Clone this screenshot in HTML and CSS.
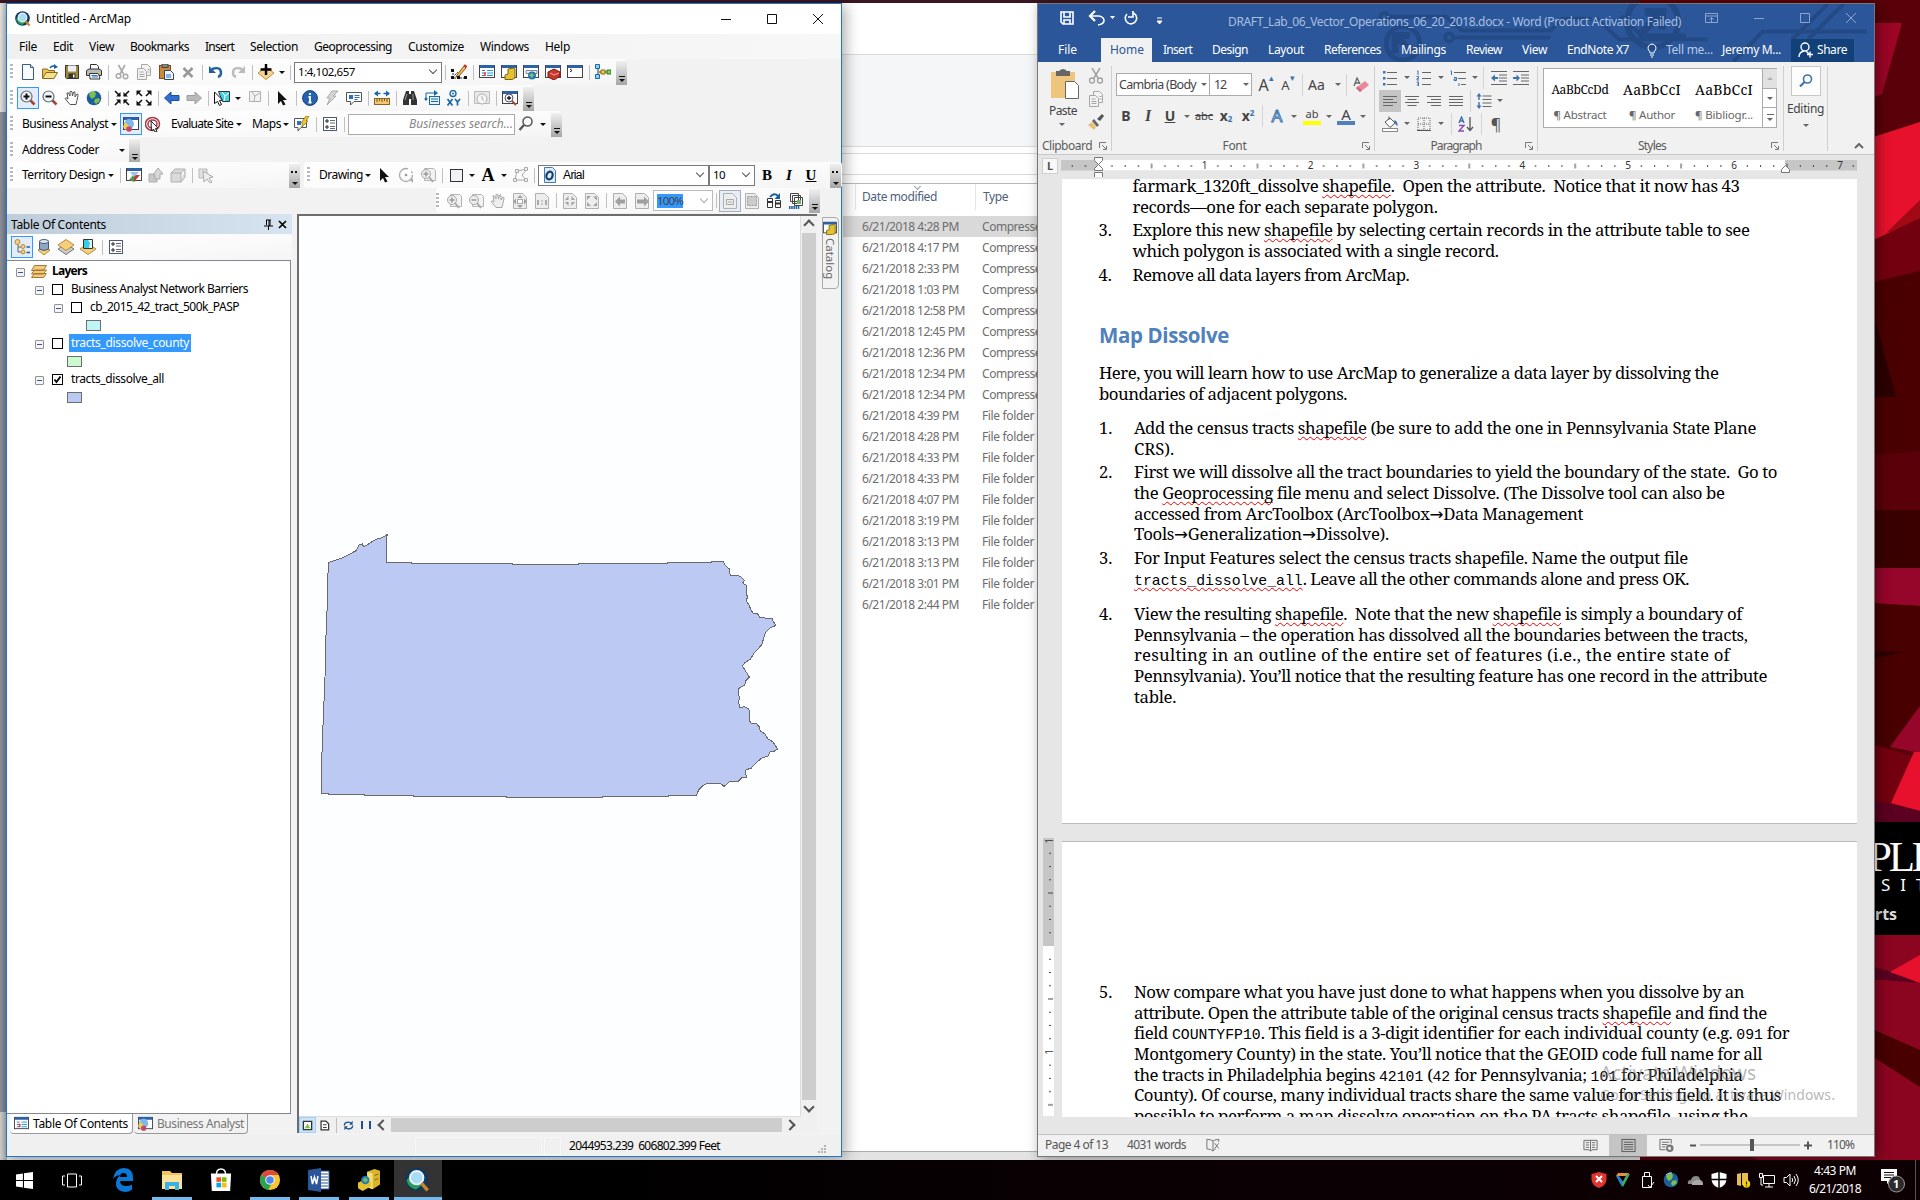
FILE: index.html
```html
<!DOCTYPE html>
<html lang="en">
<head>
<meta charset="utf-8">
<title>Untitled - ArcMap</title>
<link rel="stylesheet" href="styles.css">
</head>
<body>
<svg class="sprite">
  <symbol id="globe" viewBox="0 0 16 16"><circle cx="8" cy="8" r="7.3" fill="#1d5f9e"/><path d="M3 4l4-3 3 2-1 4-3 2-2-2zM9 9l4-1 1 3-4 3-2-2z" fill="#7cbf4a"/><path d="M3 3q3-3 6-2" stroke="#bfe0ff" fill="none"/></symbol>
  <symbol id="arcmap" viewBox="0 0 16 16"><circle cx="7.5" cy="7.5" r="7.3" fill="#12385f"/><path d="M1 8q1 5 6 6l4-3-7-6z" fill="#2a9d5b"/><circle cx="7.5" cy="6.5" r="4.3" fill="#a9dbf5" stroke="#e9f5fb" stroke-width="1.2"/><path d="M10.500 10l4 4.600" stroke="#c9862c" stroke-width="2.200"/></symbol>
  <symbol id="new" viewBox="0 0 16 16"><path d="M2.500.5h8l3 3v12h-11z" fill="#f8fbff" stroke="#3f5a80"/><path d="M10.500.5v3h3" fill="#cfe0f2" stroke="#3f5a80"/></symbol>
  <symbol id="open" viewBox="0 0 16 16"><path d="M.5 14V5h5l1 1.500h6V9" fill="#e8c35a" stroke="#8a6a1c"/><path d="M.5 14.500L4 8.500h11.500l-3.500 6z" fill="#f8df8b" stroke="#8a6a1c"/><path d="M8 4q2-3 5-1.500" stroke="#1c5fa8" stroke-width="1.500" fill="none"/><path d="M12 0l4 3-4 2z" fill="#1c5fa8"/></symbol>
  <symbol id="save" viewBox="0 0 16 16"><path d="M1.500 1.500h13v13h-12l-1-1z" fill="#a08b3a" stroke="#333"/><rect x="4" y="1.500" width="8" height="6" fill="#eef"/><rect x="4.500" y="9.500" width="7" height="5" fill="#333"/><rect x="9" y="10.500" width="1.500" height="3" fill="#fff"/></symbol>
  <symbol id="print" viewBox="0 0 16 16"><path d="M4.500 6V.5h6l2 2V6" fill="#fff" stroke="#333"/><path d="M.5 6.500L3 5h10l2.500 1.500v5H.5z" fill="#bbb" stroke="#333"/><path d="M3.500 9.500h9l1.500 5.500h-10z" fill="#fff" stroke="#333"/><path d="M5.500 11.500h6M6 13h6" stroke="#2a70c0"/><rect x="12" y="8" width="2" height="1.500" fill="#e7d43a"/></symbol>
  <symbol id="cut" viewBox="0 0 16 16"><path d="M4.500 1l5 9M11 1L6 10" stroke="#aaa" stroke-width="1.600"/><circle cx="4.500" cy="12" r="2.300" fill="none" stroke="#aaa" stroke-width="1.500"/><circle cx="11.500" cy="12.500" r="2.300" fill="none" stroke="#aaa" stroke-width="1.500"/></symbol>
  <symbol id="copy" viewBox="0 0 16 16"><path d="M5.500.5h6l3 3v8h-9z" fill="#f2f2f2" stroke="#a8a8a8"/><path d="M1.500 4.500h6l3 3v8h-9z" fill="#f2f2f2" stroke="#a8a8a8"/><path d="M3.500 8h4M3.500 10.500h5M3.500 12.500h5M11.500 5.500h2M11.500 8h2" stroke="#a8a8a8"/></symbol>
  <symbol id="paste" viewBox="0 0 16 16"><rect x="1.500" y="1.500" width="11" height="13" fill="#c98b3b" stroke="#7a4e17"/><rect x="4" y="0" width="6" height="3.500" fill="#888" stroke="#444"/><path d="M6.500 6.500h6l3 3v6h-9z" fill="#eef5ff" stroke="#345"/><path d="M8 11h5M8 13h5" stroke="#2a70c0"/></symbol>
  <symbol id="del" viewBox="0 0 16 16"><path d="M3.500 4l9 9M12.500 4l-9 9" stroke="#999" stroke-width="2.600"/></symbol>
  <symbol id="undo" viewBox="0 0 16 16"><path d="M4 5q9-3 9 4q0 3-3 4" stroke="#1f5f9f" stroke-width="2.400" fill="none"/><path d="M1 2v7h7z" fill="#1f5f9f"/></symbol>
  <symbol id="redo" viewBox="0 0 16 16"><path d="M12 5q-9-3-9 4q0 3 3 4" stroke="#bbb" stroke-width="2.400" fill="none"/><path d="M15 2v7H8z" fill="#bbb"/></symbol>
  <symbol id="add" viewBox="0 0 16 16"><path d="M8 3l8 6-8 6.500L0 9z" fill="#f6d28c" stroke="#c09040"/><path d="M8 0v11M2.500 5.500h11" stroke="#000" stroke-width="2.400"/></symbol>
  <symbol id="edit" viewBox="0 0 16 16"><path d="M2 6v8h12M2 13l5-5" stroke="#222" fill="none" stroke-dasharray="2 1"/><path d="M6 11l7-9 2 2-7 8-3 1z" fill="#f0b95b" stroke="#8a5a1c"/><path d="M13 1l3 2" stroke="#c33" stroke-width="2"/><path d="M0 5h3v3H0zM0 12h3v3H0zM6 12h3v3H6zM13 12h3v3h-3z" fill="#111"/></symbol>
  <symbol id="win" viewBox="0 0 16 16"><rect x=".5" y="1.500" width="15" height="12" fill="#fff" stroke="#444"/><rect x="1" y="1" width="14" height="3" fill="#2d62a8"/></symbol>
  <symbol id="wtoc" viewBox="0 0 16 16"><use href="#win"/><path d="M3 6.500h3M3 9h3M3 11.500h3" stroke="#3a6fc0"/><path d="M8 6.500h6M8 9h6M8 11.500h6" stroke="#1c9ae0"/><path d="M5 9h2M5 11h2" stroke="#e33" stroke-width="1.500"/></symbol>
  <symbol id="wcat" viewBox="0 0 16 16"><use href="#win"/><path d="M7 5l5-1 2 1v9l-3 1.500H4V11l3-1z" fill="#e3c22e" stroke="#7b6510"/></symbol>
  <symbol id="wsrch" viewBox="0 0 16 16"><use href="#win"/><path d="M3 6.500h11v3H3z" fill="#e8eef5" stroke="#889"/><circle cx="9" cy="11.500" r="4" fill="#2577bd"/><path d="M6 11l3-2 2 2-2 3z" fill="#81c25a"/></symbol>
  <symbol id="wbox" viewBox="0 0 16 16"><use href="#win"/><path d="M3 8l6-3 6 3v4l-6 4-6-3z" fill="#c8372b" stroke="#7d1611"/><path d="M5 9l4 2 5-2" stroke="#f3a79f" fill="none"/></symbol>
  <symbol id="wpy" viewBox="0 0 16 16"><use href="#win"/><path d="M3 5l2 1.500L3 8" stroke="#111" fill="none"/></symbol>
  <symbol id="model" viewBox="0 0 16 16"><path d="M3 5v6M4 8h10" stroke="#333"/><path d="M.5.500h4v4h-4zM.5 10.500h4v4h-4z" fill="#8ed0f7" stroke="#1966a8"/><path d="M6 6h4v4H6z" fill="#f3cf45" stroke="#87670d"/><path d="M12 6h4v4h-4z" fill="#7fcf63" stroke="#2c7a1d"/></symbol>
  <symbol id="zin" viewBox="0 0 16 16"><path d="M9.500 9.500l5 5" stroke="#a0493a" stroke-width="2.600"/><circle cx="6.500" cy="6.500" r="5.500" fill="#eef4fa" stroke="#6c6c6c" stroke-width="1.200"/><path d="M3.500 6.500h6M6.500 3.500v6" stroke="#111" stroke-width="2"/></symbol>
  <symbol id="zout" viewBox="0 0 16 16"><path d="M9.500 9.500l5 5" stroke="#a0493a" stroke-width="2.600"/><circle cx="6.500" cy="6.500" r="5.500" fill="#eef4fa" stroke="#6c6c6c" stroke-width="1.200"/><path d="M3.500 6.500h6" stroke="#111" stroke-width="2"/></symbol>
  <symbol id="hand" viewBox="0 0 16 16"><path d="M6 14.500L1 8.500q1-1.500 3 .5L3 3q1.500-1 2 1l1 2V1.500q1.500-1 2 .5l.5 4 1-4q1.500-1 1.500 1v4l2-3q1.500 0 1 1.500-1 5-2 9z" fill="#fff" stroke="#555"/></symbol>
  <symbol id="fin" viewBox="0 0 16 16"><path d="M1 1l5 5M15 1l-5 5M1 15l5-5M15 15l-5-5" stroke="#111" stroke-width="1.600"/><path d="M6.500 2v4.500H2zM9.500 2v4.500H14zM6.500 14V9.500H2zM9.500 14V9.500H14z" fill="#111"/></symbol>
  <symbol id="fout" viewBox="0 0 16 16"><path d="M2 2l4 4M14 2l-4 4M2 14l4-4M14 14l-4-4" stroke="#111" stroke-width="1.600"/><path d="M.5.500h5l-5 5zM15.500.500h-5l5 5zM.5 15.500h5l-5-5zM15.500 15.500h-5l5-5z" fill="#111"/></symbol>
  <symbol id="back" viewBox="0 0 16 16"><path d="M.5 8L7 2v3.500h8v5H7V14z" fill="#2f6fd0" stroke="#1d4e9c"/></symbol>
  <symbol id="fwd" viewBox="0 0 16 16"><path d="M15.500 8L9 2v3.500H1v5h8V14z" fill="#b9b9b9" stroke="#a0a0a0"/></symbol>
  <symbol id="sel" viewBox="0 0 16 16"><path d="M4.500 1.500h11v10h-7z" fill="#3fd0ea" stroke="#333"/><path d="M8 2l3 4 4-3M11 6l-1 5" stroke="#fff" fill="none"/><path d="M.5 2l8 8-3 .5 2 4-2 1-2-4-3 2z" fill="#fff" stroke="#111"/></symbol>
  <symbol id="clr" viewBox="0 0 16 16"><path d="M3.500 1.500h11v10h-11z" fill="#f3f3f3" stroke="#b0b0b0"/><path d="M6 2l3 4 5-3M9 6l-1 5" stroke="#b0b0b0" fill="none"/></symbol>
  <symbol id="ptr" viewBox="0 0 16 16"><path d="M4 1l9 9H9l2.500 4.500-2.500 1L7 11l-3 3z" fill="#111"/></symbol>
  <symbol id="info" viewBox="0 0 16 16"><circle cx="8" cy="8" r="7.400" fill="#2462ae" stroke="#143e78"/><path d="M8 3v2M6.500 7H8v5.500M6.500 12.500h3" stroke="#fff" stroke-width="1.800" fill="none"/></symbol>
  <symbol id="bolt" viewBox="0 0 16 16"><path d="M8 1h6L9 6h3L3 15l3-7H3z" fill="#d5d5d5" stroke="#aaa"/></symbol>
  <symbol id="html" viewBox="0 0 16 16"><path d="M.5 2.500h15v9H8L4.500 15v-3.500h-4z" fill="#fff" stroke="#555"/><rect x="3" y="5" width="4" height="4" fill="#2a6fc0"/><path d="M8.500 5.500h5M8.500 7.500h5M8.500 9.500h3" stroke="#2a6fc0"/></symbol>
  <symbol id="meas" viewBox="0 0 16 16"><path d="M1 3.500h14" stroke="#1966b0" stroke-width="1.500" stroke-dasharray="5.500 3"/><path d="M0 3.500L4 .5v6zM16 3.500L12 .5v6z" fill="#1966b0"/><rect x=".5" y="8.500" width="15" height="6" fill="#f0c877" stroke="#8c6420"/><path d="M3 9v3M5.500 9v2M8 9v3M10.500 9v2M13 9v3" stroke="#7c5614"/></symbol>
  <symbol id="bino" viewBox="0 0 16 16"><path d="M4 1h3v3h2V1h3l3 9v5H9V9H7v6H1v-5z" fill="#333"/><path d="M3 10l2-6M11 10V4" stroke="#999"/></symbol>
  <symbol id="route" viewBox="0 0 16 16"><path d="M2 8V3h9" stroke="#1966a8" fill="none"/><path d="M10 0l4 3-4 3z" fill="#1966a8"/><rect x="5.500" y="6.500" width="10" height="8" fill="#e7f2fb" stroke="#1966a8"/><path d="M7 9h7M7 11.500h7" stroke="#1966a8"/><circle cx="2" cy="9" r="1.500" fill="#1966a8"/></symbol>
  <symbol id="xy" viewBox="0 0 16 16"><circle cx="7" cy="3.500" r="3" fill="none" stroke="#1966a8" stroke-width="1.400"/><circle cx="7" cy="3.500" r="1" fill="#1966a8"/><path d="M1.500 9l5 6.500M6.500 9l-5 6.500M9 9l2.500 3L14 9M11.500 12v3.500" stroke="#1966a8" stroke-width="1.700" fill="none"/></symbol>
  <symbol id="time" viewBox="0 0 16 16"><path d="M.5 1.500h15v12H.5z" fill="#e8e8e8" stroke="#bbb"/><circle cx="8" cy="9" r="5" fill="#f6f6f6" stroke="#b0b0b0"/><path d="M8 6v3l2 1.500" stroke="#b0b0b0" fill="none"/></symbol>
  <symbol id="wview" viewBox="0 0 16 16"><use href="#win"/><circle cx="7" cy="8" r="4" fill="#eef4fa" stroke="#555"/><path d="M5 8h4M7 6v4" stroke="#111" stroke-width="1.300"/><path d="M10 11l4 4" stroke="#a0493a" stroke-width="2"/></symbol>
  <symbol id="ba" viewBox="0 0 16 16"><use href="#win"/><circle cx="6" cy="8" r="5" fill="#7fb9ea"/><path d="M2 6l5 5-4 3-3-3z" fill="#f2cf58"/><circle cx="6" cy="13" r="2.800" fill="#c4476e"/></symbol>
  <symbol id="target" viewBox="0 0 16 16"><ellipse cx="7.500" cy="8" rx="7" ry="6.500" fill="none" stroke="#a83a45" stroke-width="1.500"/><ellipse cx="7.500" cy="8" rx="4.500" ry="4" fill="none" stroke="#a83a45" stroke-width="1.500"/><path d="M6 5l7 7-2.500.5 1.500 3-2 .5-1.500-3-2 2z" fill="#fff" stroke="#222"/></symbol>
  <symbol id="note" viewBox="0 0 16 16"><path d="M.5 2.500h12v9H7L4 15v-3.500H.500z" fill="#fff" stroke="#555"/><rect x="3" y="5" width="4" height="4" fill="#2a6fc0"/><path d="M12 0h3l-3 5h2l-7 7 2-5H7z" fill="#ecc92d" stroke="#8a6d10" stroke-width=".7"/></symbol>
  <symbol id="list" viewBox="0 0 16 16"><rect x="1.500" y="1.500" width="13" height="13" fill="#fff" stroke="#4a5a72"/><path d="M8 4.500h5M8 7h5M8 10.500h5M8 12.500h5" stroke="#667"/><path d="M4 4h2v2H4zM4 10h2v2H4z" fill="none" stroke="#222"/></symbol>
  <symbol id="mag" viewBox="0 0 16 16"><circle cx="9.500" cy="5.500" r="4.500" fill="none" stroke="#555" stroke-width="1.500"/><path d="M6 9l-4.500 5" stroke="#555" stroke-width="2.400"/></symbol>
  <symbol id="terr" viewBox="0 0 16 16"><use href="#win"/><path d="M3 13l5-6v8z" fill="#4b9b4b"/><path d="M8 15V8l6 0z" fill="#c33a3a"/><path d="M4 5h9l-5 5z" fill="#9cc4ec"/></symbol>
  <symbol id="gbox" viewBox="0 0 16 16"><path d="M1 7h8v8H1z" fill="#c8c8c8" stroke="#b0b0b0"/><path d="M5 8l5-7 5 6h-3v5H7V8z" fill="#d8d8d8" stroke="#aaa"/></symbol>
  <symbol id="gcube" viewBox="0 0 16 16"><path d="M1 6h10v9H1zM1 6l4-4h10l-4 4M15 2v8l-4 5" fill="#dadada" stroke="#b0b0b0"/></symbol>
  <symbol id="garr" viewBox="0 0 16 16"><path d="M1 2h8v9H1z" fill="#e0e0e0" stroke="#b8b8b8"/><path d="M5 4l10 6-4 1 3 4-2 1-3-4-3 3z" fill="#eee" stroke="#aaa"/></symbol>
  <symbol id="rot" viewBox="0 0 16 16"><circle cx="8" cy="8" r="6.500" fill="none" stroke="#aaa" stroke-width="1.300" stroke-dasharray="32 4 2 3"/><circle cx="8" cy="8" r="1.300" fill="#999"/><path d="M11 12h4v4z" fill="#aaa"/></symbol>
  <symbol id="gzin" viewBox="0 0 16 16"><path d="M4.500 1.500h9l2 2v10h-11z" fill="#f2f2f2" stroke="#b5b5b5"/><circle cx="6" cy="7" r="4.500" fill="#eee" stroke="#a8a8a8"/><path d="M3.500 7h5M6 4.500v5" stroke="#999" stroke-width="1.500"/><path d="M9 10l4 5" stroke="#aaa" stroke-width="2"/></symbol>
  <symbol id="gzout" viewBox="0 0 16 16"><path d="M4.500 1.500h9l2 2v10h-11z" fill="#f2f2f2" stroke="#b5b5b5"/><circle cx="6" cy="7" r="4.500" fill="#eee" stroke="#a8a8a8"/><path d="M3.500 7h5" stroke="#999" stroke-width="1.500"/><path d="M9 10l4 5" stroke="#aaa" stroke-width="2"/></symbol>
  <symbol id="ghand" viewBox="0 0 16 16"><path d="M6 14.500L1 8.500q1-1.500 3 .5L3 3q1.500-1 2 1l1 2V1.500q1.500-1 2 .5l.5 4 1-4q1.500-1 1.500 1v4l2-3q1.500 0 1 1.500-1 5-2 9z" fill="#eee" stroke="#a8a8a8"/></symbol>
  <symbol id="gpage" viewBox="0 0 16 16"><path d="M1.500.5h9l4 4v11h-13z" fill="#ededed" stroke="#b0b0b0"/></symbol>
  <symbol id="gfull" viewBox="0 0 16 16"><use href="#gpage"/><path d="M8 2l3 3H5zM8 15l3-3H5zM1 8.500l3-3v6zM15 8.500l-3-3v6z" fill="#a0a0a0"/><rect x="5.500" y="6.500" width="5" height="4" fill="#fff" stroke="#aaa"/></symbol>
  <symbol id="g11" viewBox="0 0 16 16"><use href="#gpage"/><path d="M4 7v5M12 7v5M8 7.500v1M8 10.500v1" stroke="#999" stroke-width="1.600"/></symbol>
  <symbol id="gin" viewBox="0 0 16 16"><use href="#gpage"/><path d="M6.500 3v4H3zM9.500 3v4H13zM6.500 13V9H3zM9.500 13V9H13z" fill="#a0a0a0"/></symbol>
  <symbol id="gout" viewBox="0 0 16 16"><use href="#gpage"/><path d="M3 3h4L3 7zM13 3.500H9l4 4zM3 13h4L3 9zM13 13H9l4-4z" fill="#a0a0a0"/></symbol>
  <symbol id="gback" viewBox="0 0 16 16"><use href="#gpage"/><path d="M3 8.500l5-5v3h5v4H8v3z" fill="#a0a0a0"/></symbol>
  <symbol id="gfwd" viewBox="0 0 16 16"><use href="#gpage"/><path d="M15 8.500l-5-5v3H3v4h7v3z" fill="#a0a0a0"/></symbol>
  <symbol id="gfoc" viewBox="0 0 16 16"><use href="#gpage"/><path d="M4.500 6.500h7v5h-7zM6 9h4" fill="none" stroke="#a8a8a8"/></symbol>
  <symbol id="gsel" viewBox="0 0 16 16"><use href="#gpage"/><path d="M3.500 3.500h9v9h-9z" fill="#ccc" stroke="#999" stroke-dasharray="2 1"/></symbol>
  <symbol id="swap" viewBox="0 0 16 16"><path d="M4 4q4-5 8-1" stroke="#1c5f9f" stroke-width="2" fill="none"/><path d="M14 0v6H8.500z" fill="#1c5f9f"/><path d="M1.500 5.500h5v9h-5zM9.500 7.500h5v7h-5z" fill="#fff" stroke="#333"/><path d="M2 9h4M10 10.500h4" stroke="#333" stroke-width="2"/></symbol>
  <symbol id="stack" viewBox="0 0 16 16"><path d="M2.500.5h8v8h-8zM4.500 2.500h8v8h-8zM6.500 4.500h8v8h-8z" fill="#fff" stroke="#444"/><rect x="9" y="7" width="4" height="4" fill="#6cb36c"/><path d="M1 14.500h11" stroke="#1c5f9f" stroke-width="3" stroke-dasharray="1.500 .700"/></symbol>
  <symbol id="poly" viewBox="0 0 16 16"><path d="M3 13l2-9 10-2-5 6 4 5z" fill="none" stroke="#aaa"/><path d="M1.500 11.500h3v3h-3zM3.500 2.500h3v3h-3zM12.500.500h3v3h-3zM12.500 11.500h3v3h-3z" fill="#eee" stroke="#aaa"/></symbol>
  <symbol id="otf" viewBox="0 0 16 16"><path d="M2.500.5h8l3 3v12h-11z" fill="#dcebf9" stroke="#4a78b0"/><ellipse cx="7.500" cy="8.500" rx="3" ry="4" transform="rotate(20 7.500 8.500)" fill="none" stroke="#123f6e" stroke-width="2.200"/></symbol>
  <symbol id="tree" viewBox="0 0 16 16"><path d="M4 5v8h3M4 8h3" stroke="#666" fill="none"/><circle cx="3.500" cy="3" r="2.500" fill="#f4cf7d" stroke="#b98a35"/><circle cx="9" cy="7.500" r="2" fill="#f4cf7d" stroke="#b98a35"/><circle cx="9" cy="13" r="2" fill="#f4cf7d" stroke="#b98a35"/><path d="M12.500 8H16M12.500 13.500H16" stroke="#1c5fa8" stroke-width="1.500"/></symbol>
  <symbol id="src" viewBox="0 0 16 16"><path d="M8 16l-6-5 6-3 6 3z" fill="#f4cf7d" stroke="#b98a35"/><path d="M3.500 2v8q4.500 3 9 0V2z" fill="#8fa5c2" stroke="#4a5a72"/><ellipse cx="8" cy="2.500" rx="4.500" ry="2" fill="#dfe8f2" stroke="#4a5a72"/></symbol>
  <symbol id="vis" viewBox="0 0 16 16"><path d="M0 10l8 5.500 8-5.500-8-5z" fill="#ccc" stroke="#777"/><path d="M0 6l8 5.500L16 6 8 .5z" fill="#f4cf7d" stroke="#b98a35"/></symbol>
  <symbol id="lsel" viewBox="0 0 16 16"><path d="M0 10l8 5.500 8-5.500-8-5z" fill="#f4cf7d" stroke="#b98a35"/><path d="M3.500.5h9v9h-9z" fill="#35cde8" stroke="#333"/><path d="M8 1h4v8H9l1-5z" fill="#eee"/></symbol>
  <symbol id="layers" viewBox="0 0 16 16"><path d="M.5 14.500l3-4h12l-3 4zM.5 11l3-4h12l-3 4zM.5 7.500l3-5h12l-3 5z" fill="#f0cb83" stroke="#a8782c"/></symbol>
  <symbol id="refresh" viewBox="0 0 16 16"><path d="M2 8q0-5 6-5 3 0 4 2M14 8q0 5-6 5-3 0-4-2" stroke="#1c4f8f" stroke-width="2" fill="none"/><path d="M14 1v6H9zM2 15V9h5z" fill="#1c4f8f"/></symbol>
  <symbol id="mapv" viewBox="0 0 16 16"><path d="M2 2h12v12H2z" fill="#fff" stroke="#333" stroke-width="2"/><path d="M4 12l4-7 4 7z" fill="#7cbf4a"/></symbol>
  <symbol id="layv" viewBox="0 0 16 16"><path d="M3 1.500h7l4 4v9H3z" fill="#fff" stroke="#333" stroke-width="1.800"/><path d="M6 7h5M6 11h5" stroke="#333" stroke-width="1.500"/></symbol>
  <symbol id="lines" viewBox="0 0 16 16"><path d="M1 3.500h14M1 9.500h14" stroke="#666"/><path d="M1 6.500h10M1 12.500h10" stroke="#666"/></symbol>
  <symbol id="linec" viewBox="0 0 16 16"><path d="M1 3.500h14M1 9.500h14M3.500 6.500h9M3.500 12.500h9" stroke="#666"/></symbol>
  <symbol id="liner" viewBox="0 0 16 16"><path d="M1 3.500h14M1 9.500h14M5 6.500h10M5 12.500h10" stroke="#666"/></symbol>
  <symbol id="linej" viewBox="0 0 16 16"><path d="M1 3.500h14M1 9.500h14M1 6.500h14M1 12.500h14" stroke="#666"/></symbol>
  <symbol id="bul" viewBox="0 0 16 16"><path d="M5 2.500h10M5 8.500h10M5 14.500h10" stroke="#666"/><path d="M1 1h2.500v2.500H1zM1 7h2.500v2.500H1zM1 13h2.500v2.500H1z" fill="#3b73af"/></symbol>
  <symbol id="num" viewBox="0 0 16 16"><path d="M6 2.500h9M6 8.500h9M6 14.500h9" stroke="#666"/><path d="M1 1h1v4M.5 6.500h2v2h-1.500v1.500H3M.5 12h2v4H.500M1 14h1.500" stroke="#3b73af" fill="none"/></symbol>
  <symbol id="multi" viewBox="0 0 16 16"><path d="M4 2.500h12M8 8.500h8M11 14.500h5" stroke="#666"/><path d="M.5 1h1v4M4 7.500h2.500v3H4V9h2M9 13v3" stroke="#3b73af" fill="none"/></symbol>
  <symbol id="outd" viewBox="0 0 16 16"><path d="M0 1.500h16M8 5h8M8 8h8M8 11h8M0 14.500h16" stroke="#666"/><path d="M0 8l4-3.500v2.500h3v2H4v2.500z" fill="#3b73af"/></symbol>
  <symbol id="ind" viewBox="0 0 16 16"><path d="M0 1.500h16M8 5h8M8 8h8M8 11h8M0 14.500h16" stroke="#666"/><path d="M7 8L3.500 4.500v2.500H0v2h3.500v2.500z" fill="#3b73af"/></symbol>
  <symbol id="spc" viewBox="0 0 16 16"><path d="M6.500 3h9M6.500 6.500h9M6.500 10h9M6.500 13.500h9" stroke="#666"/><path d="M3 1v14" stroke="#3b73af" stroke-width="1.400" stroke-dasharray="6 2"/><path d="M3 0L.500 3.500h5zM3 16L.500 12.500h5z" fill="#3b73af"/></symbol>
  <symbol id="bucket" viewBox="0 0 16 16"><path d="M3 6l5-4 5 5-5 4.500zM7 4V.500" fill="#fff" stroke="#555"/><path d="M12 4q4 1 3.500 6-2-1-3-4z" fill="#3b73af"/><rect x=".5" y="12.500" width="15" height="3" fill="#fff" stroke="#888"/></symbol>
  <symbol id="bord" viewBox="0 0 16 16"><path d="M2 2h12v12H2zM8 2v12M2 8h12" stroke="#666" stroke-dasharray="1 1" fill="none"/><path d="M1 14.500h14" stroke="#555"/></symbol>
  <symbol id="az" viewBox="0 0 16 16"><path d="M1 7l2.500-6L6 7M2 5h3" stroke="#3b73af" stroke-width="1.400" fill="none"/><path d="M1 9.500h5L1 15h5" stroke="#8b4bb0" stroke-width="1.400" fill="none"/><path d="M12 1v13M9 11l3 3.500 3-3.500" stroke="#555" stroke-width="1.300" fill="none"/></symbol>
  <symbol id="era" viewBox="0 0 16 16"><path d="M1 9l3-8 3 6M2 6h4" stroke="#666" stroke-width="1.300" fill="none"/><path d="M3 11l9-7 4 4-9 7z" fill="#ea8799"/><path d="M3 11l2-1.500 4 4L7 15z" fill="#d76a80"/></symbol>
  <symbol id="cut2" viewBox="0 0 16 16"><path d="M4 0l6 10M12 0L6 10" stroke="#a0a0a0" stroke-width="1.500"/><circle cx="4" cy="12.500" r="2.500" fill="none" stroke="#a0a0a0" stroke-width="1.300"/><circle cx="12" cy="12.500" r="2.500" fill="none" stroke="#a0a0a0" stroke-width="1.300"/></symbol>
  <symbol id="brush" viewBox="0 0 16 16"><path d="M9 5l5-5 2 2-4 5z" fill="#555"/><path d="M6 5l5 6-2 2-5-6z" fill="#666"/><path d="M4 8l4 5-2 3-6-5z" fill="#eabf74"/></symbol>
  <symbol id="launch" viewBox="0 0 8 8"><path d="M.5 6V.5H7M3 3l4 4M7.500 4v3.500H4" stroke="#777" fill="none"/></symbol>
  <symbol id="book" viewBox="0 0 16 16"><path d="M8 2.500H1v10h5.500L8 14l1.500-1.500H15v-10zM8 2.500V14M3 5h3.500M3 7.500h3.500M3 10h3.500M9.500 5H13M9.500 7.500H13M9.500 10H13" stroke="#666" fill="none"/></symbol>
  <symbol id="page" viewBox="0 0 16 16"><rect x="1" y="1.500" width="14" height="13" fill="none" stroke="#555"/><path d="M3 4.500h10M3 7h10M3 9.500h10M3 12h10" stroke="#555"/></symbol>
  <symbol id="web" viewBox="0 0 16 16"><path d="M13 6V1.500H1v11h6M3 4.500h8M3 7h6M3 9.500h4" stroke="#666" fill="none"/><circle cx="11.500" cy="11" r="4" fill="#777"/><path d="M9 10l3-1 1 3-2 1z" fill="#eee"/></symbol>
  <symbol id="proof" viewBox="0 0 16 16"><path d="M8 3.500Q6 1.500 1 1.500v11q5 0 7 2.500 1-2 3-2.500M8 3.500Q9 2 14.500 1.500v3M8 3.500V14M10 6l4.500 6M14.500 6L10 12" stroke="#666" fill="none"/></symbol>
</svg>

<svg class="wall" viewBox="0 0 1920 1200">
  <rect width="1920" height="1200" fill="#5a0009"/>
  <rect width="1640" height="4" fill="#3a1522"/>
  <path d="M1870 23h32l-20 71-12 5z" fill="#9c0526"/>
  <path d="M1870 138l50-16v96l-50 24z" fill="#e8112d"/><path d="M1886 233l34-33v22z" fill="#a00a14"/>
  <path d="M1870 242l50-24v53l-50 12z" fill="#73000f"/><path d="M1870 283l50-12v180l-50 4z" fill="#4a0000"/>
  <path d="M1870 300l26 97h-26z" fill="#2c0000"/><path d="M1870 510h50v58h-50z" fill="#3a0000"/>
  <path d="M1870 568h50v38l-50-3z" fill="#96052a"/><path d="M1870 603l50 3v147l-50-8z" fill="#480000"/>
  <path d="M1870 651l35 1-35 7z" fill="#2c0000"/><path d="M1870 744l50 14v52l-50-8z" fill="#73000f"/>
  <path d="M1920 706l-30 41 30 6z" fill="#96052a"/><path d="M1914 752h6v59l-29-8z" fill="#e8112d"/>
  <path d="M1870 799l50 12v11h-50z" fill="#5b0020"/><path d="M1870 935h50v265h-50z" fill="#8c0520"/>
  <path d="M1870 966l23 6 27 11-50-4z" fill="#5b0020"/><path d="M1920 955l-30 17 30 11z" fill="#e8112d"/>
  <path d="M1870 1028l50 22v37l-50-32z" fill="#480000"/><path d="M1640 1150h120l60 20h-180z" fill="#5a0009"/><path d="M1750 1156h130v10h-110z" fill="#8c0520"/>
  <rect x="1860" y="822" width="60" height="113" fill="#000"/>
  <text x="1868" y="871" class="brand" textLength="70">PLE</text>
  <text x="1881" y="891" class="brand2" textLength="64">SITY</text>
  <text x="1875" y="920" class="brand3">rts</text>
</svg>

<section class="explorer">
  <div class="ex-nav"></div>
  <div class="ex-main">
    <div class="ex-top"></div>
    <div class="ex-ribbon"></div>
    <div class="ex-addr"></div>
    <div class="ex-addr2"></div>
    <div class="ex-head"><span data-w="75">Date modified</span><i class="ex-sort"></i><div class="ex-type"><span data-w="25">Type</span></div></div>
    <div class="ex-rows">
      <div class="ex-row on"><span data-w="97">6/21/2018 4:28 PM</span><span data-w="66">Compressed</span></div>
      <div class="ex-row"><span data-w="97">6/21/2018 4:17 PM</span><span data-w="66">Compressed</span></div>
      <div class="ex-row"><span data-w="97">6/21/2018 2:33 PM</span><span data-w="66">Compressed</span></div>
      <div class="ex-row"><span data-w="97">6/21/2018 1:03 PM</span><span data-w="66">Compressed</span></div>
      <div class="ex-row"><span data-w="103">6/21/2018 12:58 PM</span><span data-w="66">Compressed</span></div>
      <div class="ex-row"><span data-w="103">6/21/2018 12:45 PM</span><span data-w="66">Compressed</span></div>
      <div class="ex-row"><span data-w="103">6/21/2018 12:36 PM</span><span data-w="66">Compressed</span></div>
      <div class="ex-row"><span data-w="103">6/21/2018 12:34 PM</span><span data-w="66">Compressed</span></div>
      <div class="ex-row"><span data-w="103">6/21/2018 12:34 PM</span><span data-w="66">Compressed</span></div>
      <div class="ex-row"><span data-w="97">6/21/2018 4:39 PM</span><span data-w="52">File folder</span></div>
      <div class="ex-row"><span data-w="97">6/21/2018 4:28 PM</span><span data-w="52">File folder</span></div>
      <div class="ex-row"><span data-w="97">6/21/2018 4:33 PM</span><span data-w="52">File folder</span></div>
      <div class="ex-row"><span data-w="97">6/21/2018 4:33 PM</span><span data-w="52">File folder</span></div>
      <div class="ex-row"><span data-w="97">6/21/2018 4:07 PM</span><span data-w="52">File folder</span></div>
      <div class="ex-row"><span data-w="97">6/21/2018 3:19 PM</span><span data-w="52">File folder</span></div>
      <div class="ex-row"><span data-w="97">6/21/2018 3:13 PM</span><span data-w="52">File folder</span></div>
      <div class="ex-row"><span data-w="97">6/21/2018 3:13 PM</span><span data-w="52">File folder</span></div>
      <div class="ex-row"><span data-w="97">6/21/2018 3:01 PM</span><span data-w="52">File folder</span></div>
      <div class="ex-row"><span data-w="97">6/21/2018 2:44 PM</span><span data-w="52">File folder</span></div>
    </div>
  </div>
</section>

<section class="arc">
  <header class="arc-title">
    <svg class="ic"><use href="#arcmap"/></svg><span data-w="95">Untitled - ArcMap</span>
    <svg class="winbtns" viewBox="0 0 104 12"><path d="M0 6.500h10M46.500 1.500h9v9h-9zM92 1l10 10M102 1L92 11" stroke="#111" fill="none"/></svg>
  </header>
  <nav class="arc-menu"><span data-w="18">File</span><span data-w="20">Edit</span><span data-w="25">View</span><span data-w="59">Bookmarks</span><span data-w="29">Insert</span><span data-w="48">Selection</span><span data-w="78">Geoprocessing</span><span data-w="56">Customize</span><span data-w="49">Windows</span><span data-w="25">Help</span></nav>

  <div class="tb"><i class="grip"></i><b class="c"><svg><use href="#new"/></svg></b><b class="c"><svg><use href="#open"/></svg></b><b class="c"><svg><use href="#save"/></svg></b><b class="c"><svg><use href="#print"/></svg></b><i class="v"></i><b class="c"><svg><use href="#cut"/></svg></b><b class="c"><svg><use href="#copy"/></svg></b><b class="c"><svg><use href="#paste"/></svg></b><b class="c"><svg><use href="#del"/></svg></b><i class="v"></i><b class="c"><svg><use href="#undo"/></svg></b><b class="c"><svg><use href="#redo"/></svg></b><i class="v"></i><b class="c"><svg><use href="#add"/></svg></b><i class="d"></i><i class="v"></i><div class="combo scale"><span data-w="57">1:4,102,657</span><i class="chev"></i></div><i class="v"></i><b class="c"><svg><use href="#edit"/></svg></b><i class="v"></i><b class="c"><svg><use href="#wtoc"/></svg></b><b class="c"><svg><use href="#wcat"/></svg></b><b class="c"><svg><use href="#wsrch"/></svg></b><b class="c"><svg><use href="#wbox"/></svg></b><b class="c"><svg><use href="#wpy"/></svg></b><i class="v"></i><b class="c"><svg><use href="#model"/></svg></b><i class="ovf"></i></div>

  <div class="tb"><i class="grip"></i><b class="c on"><svg><use href="#zin"/></svg></b><b class="c"><svg><use href="#zout"/></svg></b><b class="c"><svg><use href="#hand"/></svg></b><b class="c"><svg><use href="#globe"/></svg></b><i class="v"></i><b class="c"><svg><use href="#fin"/></svg></b><b class="c"><svg><use href="#fout"/></svg></b><i class="v"></i><b class="c"><svg><use href="#back"/></svg></b><b class="c"><svg><use href="#fwd"/></svg></b><i class="v"></i><b class="c"><svg><use href="#sel"/></svg></b><i class="d"></i><b class="c"><svg><use href="#clr"/></svg></b><i class="v"></i><b class="c"><svg><use href="#ptr"/></svg></b><i class="v"></i><b class="c"><svg><use href="#info"/></svg></b><b class="c"><svg><use href="#bolt"/></svg></b><b class="c"><svg><use href="#html"/></svg></b><i class="v"></i><b class="c"><svg><use href="#meas"/></svg></b><i class="v"></i><b class="c"><svg><use href="#bino"/></svg></b><b class="c"><svg><use href="#route"/></svg></b><b class="c"><svg><use href="#xy"/></svg></b><i class="v"></i><b class="c"><svg><use href="#time"/></svg></b><i class="v"></i><b class="c"><svg><use href="#wview"/></svg></b><i class="ovf"></i></div>

  <div class="tb"><i class="grip txt"></i><span data-w="86">Business Analyst</span><i class="d wide"></i><b class="c on"><svg><use href="#ba"/></svg></b><b class="c"><svg><use href="#target"/></svg></b><span class="gap7" data-w="62">Evaluate Site</span><i class="d wide"></i><span class="gap7" data-w="29">Maps</span><i class="d"></i><b class="c"><svg><use href="#note"/></svg></b><i class="v"></i><b class="c"><svg><use href="#list"/></svg></b><i class="v"></i><div class="combo search"><em data-w="104">Businesses search...</em></div><b class="c"><svg><use href="#mag"/></svg></b><i class="d wide"></i><i class="ovf"></i></div>

  <div class="tb"><i class="grip txt"></i><span data-w="77">Address Coder</span><i class="d far"></i><i class="ovf"></i></div>

  <div class="tbline">
    <div class="tb terr"><i class="grip txt"></i><span data-w="83">Territory Design</span><i class="d wide"></i><i class="v"></i><b class="c"><svg><use href="#terr"/></svg></b><b class="c"><svg><use href="#gbox"/></svg></b><b class="c"><svg><use href="#gcube"/></svg></b><i class="v"></i><b class="c"><svg><use href="#garr"/></svg></b><i class="ovf more"></i></div>
    <div class="tb draw"><i class="grip txt"></i><span data-w="44">Drawing</span><i class="d"></i><b class="c"><svg><use href="#ptr"/></svg></b><b class="c"><svg><use href="#rot"/></svg></b><b class="c"><svg><use href="#gzin"/></svg></b><i class="v"></i><b class="c"><i class="box"></i></b><i class="d"></i><b class="c serif">A</b><i class="d"></i><b class="c"><svg><use href="#poly"/></svg></b><i class="v"></i><div class="combo face"><svg class="ic"><use href="#otf"/></svg><span data-w="21">Arial</span><i class="chev"></i></div><div class="combo size"><span data-w="12">10</span><i class="chev"></i></div><b class="c serif s">B</b><b class="c serif s it">I</b><b class="c serif s un">U</b><i class="ovf more"></i></div>
  </div>
  <div class="tb layout"><i class="grip"></i><b class="c"><svg><use href="#gzin"/></svg></b><b class="c"><svg><use href="#gzout"/></svg></b><b class="c"><svg><use href="#ghand"/></svg></b><b class="c"><svg><use href="#gfull"/></svg></b><b class="c"><svg><use href="#g11"/></svg></b><i class="v"></i><b class="c"><svg><use href="#gin"/></svg></b><b class="c"><svg><use href="#gout"/></svg></b><i class="v"></i><b class="c"><svg><use href="#gback"/></svg></b><b class="c"><svg><use href="#gfwd"/></svg></b><div class="combo pct"><mark>100%</mark><i class="chev"></i></div><i class="v"></i><b class="c off"><svg><use href="#gfoc"/></svg></b><b class="c"><svg><use href="#gsel"/></svg></b><b class="c"><svg><use href="#swap"/></svg></b><b class="c"><svg><use href="#stack"/></svg></b><i class="ovf"></i></div>

  <div class="arc-body">
    <aside class="toc">
      <div class="toc-head"><span data-w="95">Table Of Contents</span><svg viewBox="0 0 26 12"><path d="M4 1h5M4.500 1v5M8 1v6M7 1v6M2 7h9M6.500 7v4" stroke="#000" fill="none"/><path d="M17 2l7 7M24 2l-7 7" stroke="#000" stroke-width="1.700"/></svg></div>
      <div class="tb tocbar"><b class="c on"><svg><use href="#tree"/></svg></b><b class="c"><svg><use href="#src"/></svg></b><b class="c"><svg><use href="#vis"/></svg></b><b class="c"><svg><use href="#lsel"/></svg></b><i class="v"></i><b class="c"><svg><use href="#list"/></svg></b></div>
      <div class="tree">
        <div class="tr l0"><i class="pm"></i><svg class="ic"><use href="#layers"/></svg><strong data-w="35">Layers</strong></div>
        <div class="tr l1"><i class="pm"></i><i class="cb"></i><span data-w="177">Business Analyst Network Barriers</span></div>
        <div class="tr l2"><i class="pm"></i><i class="cb"></i><span data-w="149">cb_2015_42_tract_500k_PASP</span></div>
        <div class="tr s2"><i class="sw cyan"></i></div>
        <div class="tr l1"><i class="pm"></i><i class="cb"></i><mark><span data-w="118">tracts_dissolve_county</span></mark></div>
        <div class="tr s1"><i class="sw green"></i></div>
        <div class="tr l1"><i class="pm"></i><i class="cb"><svg viewBox="0 0 9 9"><path d="M1.500 4.500l2 2.500 4-5.500" stroke="#000" stroke-width="1.900" fill="none"/></svg></i><span data-w="93">tracts_dissolve_all</span></div>
        <div class="tr s1"><i class="sw blue"></i></div>
      </div>
      <div class="tabs"><div class="tab act"><svg class="ic"><use href="#wtoc"/></svg><span data-w="95">Table Of Contents</span></div><div class="tab"><svg class="ic"><use href="#ba"/></svg><span data-w="87">Business Analyst</span></div></div>
    </aside>
    <div class="mapwrap">
      <div class="maprow">
        <div class="map"><svg viewBox="0 0 1560 900" shape-rendering="crispEdges"><path d="M86 131L104 124 124 118 140 110 152 104 168 95 173 85 178 76H184L187 75 190 82 198 80 210 72 220 66 234 59 246 56 255 51 262 46 260 54V130H333V132H597V134H628V132H638V135H834V133H1101V130H1233V127H1269L1274 136 1281 144 1288 150V160L1292 168H1310L1322 173 1328 180 1334 184 1328 192 1338 198 1340 212 1338 222 1343 234 1338 246 1346 256 1352 270 1360 285 1372 284 1380 295 1395 297 1405 300 1417 299V304L1427 317 1424 321 1408 328 1396 342 1391 357 1386 376 1374 390 1362 402 1352 420 1334 432 1327 440 1338 458 1348 474 1338 484 1334 498 1322 504 1315 510V526L1319 534 1316 548 1319 566H1324L1332 562 1344 568 1348 576V605L1355 614H1370L1378 624 1381 636 1394 644 1404 660 1418 668 1433 690 1424 696 1410 698 1404 711 1385 717 1368 732 1353 748 1338 752 1336 762 1340 774 1326 776 1316 786H1290L1280 796 1272 802 1266 796 1256 793H1222L1208 800 1196 812 1190 829H1104V832H908V835H619V832H339V829H192V826H84V824H64V766L67 668 71 572 75 474 77 375 81 278 83 180Z" fill="#bcc9f2" stroke="#6a6a6a" stroke-width="3"/></svg></div>
        <div class="vs"><i class="ar up"></i><i class="thumb"></i><i class="ar dn"></i></div>
      </div>
      <div class="hs"><i class="vw on"><svg class="ic10"><use href="#mapv"/></svg></i><i class="vw"><svg class="ic10"><use href="#layv"/></svg></i><i class="v"></i><i class="vw"><svg class="ic10"><use href="#refresh"/></svg></i><i class="vw pause"></i><i class="ar lf"></i><i class="thumb"></i><i class="ar rt"></i></div>
    </div>
    <div class="cat"><div class="cat-tab"><svg class="ic"><use href="#wcat"/></svg><span>Catalog</span></div></div>
  </div>
  <footer class="arc-status"><i></i><i></i><span data-w="151">2044953.239&nbsp; 606802.399 Feet</span><svg viewBox="0 0 9 9"><path d="M6 0h2v2H6zM3 3h2v2H3zM6 3h2v2H6zM0 6h2v2H0zM3 6h2v2H3zM6 6h2v2H6z" fill="#b5b5b5"/></svg></footer>
</section>

<section class="word">
  <svg class="circuit" viewBox="0 0 836 59" fill="none" stroke="#244a86" stroke-width="4"><path d="M348 13h60l16 14h90l12-12h30M414 34h100M560 14l24 22h90M586 12l20 20h46M700 59l30-31h106M760 36l36-36M776 36l36-36"/><circle cx="345" cy="13" r="4"/><circle cx="411" cy="34" r="4"/><circle cx="364" cy="40" r="17" stroke-width="5"/><path d="M356 50v-18h15M358 34l16 16" stroke-width="7"/><circle cx="618" cy="18" r="26" stroke-width="6"/><path d="M606 30l20-20M610 8h18v18" stroke-width="8"/></svg>
  <header class="w-title">
    <svg class="qat" viewBox="0 0 110 18" fill="none" stroke="#fff" stroke-width="1.600"><path d="M1 2h12v12H3l-2-2zM4 2v5h6V2M4 14v-4h6v4"/><path d="M31 6h8q5 1 5 4.500t-6 4.500"/><path d="M35 1l-5 5 5 5" stroke-width="2.200"/><path d="M50 6h5l-2.500 3z" fill="#fff" stroke="none"/><path d="M67 4a5.700 5.700 0 1 0 5-1.500M73 1v6h-5"/><path d="M97 8h5M97 11h5l-2.500 3z" stroke-width="1" fill="#fff"/></svg>
    <span class="w-name" data-w="453">DRAFT_Lab_06_Vector_Operations_06_20_2018.docx - Word (Product Activation Failed)</span>
    <svg class="w-btns" viewBox="0 0 152 12" fill="none" stroke="#8ba6cf"><path d="M.5 1.500h12v9H.500zM.5 4h12M6.500 10V5.500M4.500 7.500l2-2 2 2M49 6.500h10M95.500 1.500h9v9h-9zM141 1l10 10M151 1l-10 10"/></svg>
  </header>
  <nav class="w-tabs"><span class="file" data-w="19">File</span><div class="home"><span data-w="34">Home</span></div><span data-w="29">Insert</span><span data-w="36">Design</span><span data-w="36">Layout</span><span data-w="57">References</span><span data-w="45">Mailings</span><span data-w="36">Review</span><span data-w="25">View</span><span data-w="62">EndNote X7</span><svg class="bulb" viewBox="0 0 12 15"><path d="M4 10Q4 8 2.500 7A4 4 0 1 1 9.500 7Q8 8 8 10zM4 12h4M5 14h2" stroke="#fff" fill="none"/></svg><span class="tell" data-w="47">Tell me...</span><span class="user" data-w="59">Jeremy M...</span><div class="share"><svg viewBox="0 0 16 16"><circle cx="7" cy="5" r="4" fill="none" stroke="#fff" stroke-width="1.400"/><path d="M1 15q0-5 5-6M8 9l3 3M9 12.500h6M12 9.500v6" stroke="#fff" stroke-width="1.400" fill="none"/></svg><span data-w="30">Share</span></div></nav>

  <div class="ribbon">
    <div class="g clip"><div class="g-body">
      <div class="pastebtn"><svg viewBox="0 0 28 30"><rect y="3" width="24" height="26" fill="#eec57c"/><path d="M5 2h3q4-4 8 0h3v5H5z" fill="#666"/><path d="M14.500 12.500h9l4 4v13h-13z" fill="#fff" stroke="#666"/></svg><span data-w="28">Paste</span><i class="d"></i></div>
      <div class="clipcol"><svg><use href="#cut2"/></svg><svg><use href="#copy"/></svg><svg><use href="#brush"/></svg></div>
    </div><div class="g-lab"><span data-w="50">Clipboard</span><svg class="la"><use href="#launch"/></svg></div></div>
    <div class="g font"><div class="g-body col">
      <div class="r r1"><div class="wc wf"><span data-w="77">Cambria (Body</span><i class="d"></i></div><div class="wc ws"><span data-w="12">12</span><i class="d"></i></div><b class="c big">A<sup>▴</sup></b><b class="c sm">A<sup>▾</sup></b><i class="v"></i><b class="aa">Aa</b><i class="d"></i><i class="v"></i><b class="c er"><svg><use href="#era"/></svg></b></div>
      <div class="r r2"><b class="c bd">B</b><b class="c it">I</b><b class="c un">U</b><i class="d"></i><b class="c st">abc</b><b class="c xx">x<sub>2</sub></b><b class="c xx">x<sup>2</sup></b><i class="v"></i><b class="c glow">A</b><i class="d"></i><b class="c hl">ab</b><i class="d"></i><b class="c fc">A</b><i class="d"></i></div>
    </div><div class="g-lab"><span data-w="24">Font</span><svg class="la"><use href="#launch"/></svg></div></div>
    <div class="g para"><div class="g-body col">
      <div class="r p1"><b class="c"><svg><use href="#bul"/></svg></b><i class="d"></i><b class="c"><svg><use href="#num"/></svg></b><i class="d"></i><b class="c"><svg><use href="#multi"/></svg></b><i class="d"></i><i class="v"></i><b class="c"><svg><use href="#outd"/></svg></b><b class="c"><svg><use href="#ind"/></svg></b></div>
      <div class="r p2"><b class="c sel"><svg><use href="#lines"/></svg></b><b class="c"><svg><use href="#linec"/></svg></b><b class="c"><svg><use href="#liner"/></svg></b><b class="c"><svg><use href="#linej"/></svg></b><i class="v"></i><b class="c"><svg><use href="#spc"/></svg></b><i class="d"></i></div>
      <div class="r p3"><b class="c"><svg><use href="#bucket"/></svg></b><i class="d"></i><b class="c"><svg><use href="#bord"/></svg></b><i class="d"></i><i class="v"></i><b class="c"><svg><use href="#az"/></svg></b><i class="v"></i><b class="c pil">¶</b></div>
    </div><div class="g-lab"><span data-w="51">Paragraph</span><svg class="la"><use href="#launch"/></svg></div></div>
    <div class="g styl"><div class="g-body"><div class="gal">
      <div><p class="q1" data-w="57">AaBbCcDd</p><p data-w="53">¶ Abstract</p></div><div><p data-w="58">AaBbCcI</p><p data-w="46">¶ Author</p></div><div><p data-w="58">AaBbCcI</p><p data-w="58">¶ Bibliogr...</p></div>
      <section class="gs"><i class="u"></i><i class="n"></i><i class="m"></i></section></div>
    </div><div class="g-lab"><span data-w="28">Styles</span><svg class="la"><use href="#launch"/></svg></div></div>
    <div class="g edit"><div class="ebox"><svg viewBox="0 0 16 16"><circle cx="9.500" cy="6" r="4" fill="none" stroke="#3b73af" stroke-width="1.600"/><path d="M6.500 9L2 13.500" stroke="#3b73af" stroke-width="2.200"/></svg></div><span data-w="37">Editing</span><i class="d"></i></div>
    <svg class="coll" viewBox="0 0 10 6"><path d="M1 5l4-4 4 4" stroke="#666" stroke-width="2" fill="none"/></svg>
  </div>

  <div class="rulerrow">
    <div class="tabsel">L</div>
    <svg class="ruler" viewBox="0 0 796 22"><defs><pattern id="tk" width="105.9" height="22" patternUnits="userSpaceOnUse" patternTransform="translate(37.700 0)"><path d="M13.200 10v2M26.500 10v2M39.700 10v2M66.200 10v2M79.400 10v2M92.700 10v2M52.900 8.500v5" stroke="#444"/></pattern></defs>
      <rect y="5" width="796" height="10.500" fill="#c6c6c6"/><rect x="38" y="5" width="686" height="10.500" fill="#fff"/><rect width="796" height="22" fill="url(#tk)"/>
      <g class="rn"><text x="143.600" y="14">1</text><text x="249.500" y="14">2</text><text x="355.400" y="14">3</text><text x="461.300" y="14">4</text><text x="567.200" y="14">5</text><text x="673" y="14">6</text><text x="779" y="14">7</text></g>
      <path d="M33.500 2.500h8v3l-4 4-4-4zM33.500 15.500v-2l4-4 4 4v2zM33.500 17.500h8v5h-8zM720.500 17.500v-3l4-4 4 4v3z" fill="#fff" stroke="#777"/></svg>
  </div>
  <div class="doc">
    <div class="vrule"><svg viewBox="0 0 11 278"><defs><pattern id="tv" width="11" height="105.9" patternUnits="userSpaceOnUse" patternTransform="translate(0 108)"><path d="M6 13.200h2M6 26.500h2M6 39.700h2M6 66.200h2M6 79.400h2M6 92.700h2M5 52.900h5" stroke="#444"/></pattern></defs><rect width="11" height="108" fill="#c6c6c6"/><rect y="108" width="11" height="170" fill="#fff"/><rect width="11" height="278" fill="url(#tv)"/><g class="rn"><text transform="translate(10 3) rotate(-90)">1</text><text transform="translate(10 214) rotate(-90)">1</text></g></svg></div>
    <div class="pages">
      <article class="p-a">
        <ol>
          <li><p data-w="606.5">farmark_1320ft_dissolve <u>shapefile</u>.&nbsp; Open the attribute.&nbsp; Notice that it now has 43</p><p data-w="305">records—one for each separate polygon.</p></li>
          <li class="g3"><s>3.</s><p data-w="616.5">Explore this new <u>shapefile</u> by selecting certain records in the attribute table to see</p><p data-w="366">which polygon is associated with a single record.</p></li>
          <li class="g3"><s>4.</s><p data-w="276.5">Remove all data layers from ArcMap.</p></li>
        </ol>
        <h2 data-w="130">Map Dissolve</h2>
        <div class="intro"><p data-w="619.5">Here, you will learn how to use ArcMap to generalize a data layer by dissolving the</p><p data-w="248">boundaries of adjacent polygons.</p></div>
        <ol class="two">
          <li><s>1.</s><p data-w="621.5">Add the census tracts <u>shapefile</u> (be sure to add the one in Pennsylvania State Plane</p><p data-w="40">CRS).</p></li>
          <li class="g3"><s>2.</s><p data-w="643">First we will dissolve all the tract boundaries to yield the boundary of the state.&nbsp; Go to</p><p data-w="590">the <u>Geoprocessing</u> file menu and select Dissolve. (The Dissolve tool can also be</p><p data-w="449">accessed from ArcToolbox (ArcToolbox→Data Management</p><p data-w="255">Tools→Generalization→Dissolve).</p></li>
          <li class="g3"><s>3.</s><p data-w="553">For Input Features select the census tracts shapefile. Name the output file</p><p data-w="555"><u><code>tracts_dissolve_all</code></u>. Leave all the other commands alone and press OK.</p></li>
          <li class="g15"><s>4.</s><p data-w="607">View the resulting <u>shapefile</u>.&nbsp; Note that the new <u>shapefile</u> is simply a boundary of</p><p data-w="613.5">Pennsylvania – the operation has dissolved all the boundaries between the tracts,</p><p data-w="596">resulting in an outline of the entire set of features (i.e., the entire state of</p><p data-w="633">Pennsylvania). You’ll notice that the resulting feature has one record in the attribute</p><p data-w="42">table.</p></li>
        </ol>
      </article>
      <article class="p-b">
        <ol class="two">
          <li><s>5.</s><p data-w="610">Now compare what you have just done to what happens when you dissolve by an</p><p data-w="632">attribute. Open the attribute table of the original census tracts <u>shapefile</u> and find the</p><p data-w="654">field <code>COUNTYFP10</code>. This field is a 3-digit identifier for each individual county (e.g. <code>091</code> for</p><p data-w="628">Montgomery County) in the state. You’ll notice that the GEOID code full name for all</p><p data-w="608.5">the tracts in Philadelphia begins <code>42101</code> (<code>42</code> for Pennsylvania; <code>101</code> for Philadelphia</p><p data-w="646.5">County). Of course, many individual tracts share the same value for this field. It is thus</p><p data-w="613">possible to perform a map dissolve operation on the PA tracts shapefile, using the</p></li>
        </ol>
      </article>
    </div>
  </div>
  <footer class="w-status"><span data-w="63">Page 4 of 13</span><span data-w="59">4031 words</span><svg><use href="#proof"/></svg><div class="views"><b><svg><use href="#book"/></svg></b><b class="sel"><svg><use href="#page"/></svg></b><b><svg><use href="#web"/></svg></b></div><svg class="zoomer" viewBox="0 0 124 12"><path d="M0 6.500h6M114 6.500h8M118 2.500v8" stroke="#555" stroke-width="2"/><path d="M10 6h100" stroke="#999"/><rect x="60" y="0" width="4" height="12" fill="#555"/></svg><span data-w="27">110%</span></footer>
</section>

<div class="watermark"><p data-w="156">Activate Windows</p><p class="sm" data-w="235">Go to Settings to activate Windows.</p></div>

<footer class="taskbar">
  <b class="start"><svg viewBox="0 0 16 16"><path d="M0 2.300L6.500 1.400v6.100H0zM7.500 1.200L16 0v7.500H7.500zM0 8.500h6.500v6.100L0 13.700zM7.500 8.500H16V16L7.500 14.800z" fill="#fff"/></svg></b>
  <b class="start"><svg viewBox="0 0 20 16"><path d="M5.500 1.500h9v13h-9zM3 3.500H.500v9H3M17 3.500h2.500v9H17" stroke="#fff" fill="none"/></svg></b>
  <b><svg viewBox="0 0 20 24"><path d="M0 11Q2 0 11 0q9 0 9 10v3H7q0 5 6 5 4 0 6-1.500v5Q16 24 12 24 2 23 3 14q1-5 5-7-5 0-8 4zm7-2h7q0-4-3.500-4T7 9z" fill="#0a78d7"/></svg></b>
  <b class="run"><svg viewBox="0 0 22 22"><path d="M1 2h8l2 2h10v16H1z" fill="#f0c65a"/><path d="M1 6h20v14H1z" fill="#fbe29b"/><path d="M4 21v-8h14v8h-4v-4H8v4z" fill="#3ab0e5"/></svg></b>
  <b><svg viewBox="0 0 24 26"><path d="M7 7q0-6 5-6t5 6" stroke="#fff" fill="none" stroke-width="1.500"/><path d="M1 6h22l-1 19H2z" fill="#fff"/><path d="M7 10h5v5H7z" fill="#f25022"/><path d="M13 10h5v5h-5z" fill="#7fba00"/><path d="M7 16h5v5H7z" fill="#00a4ef"/><path d="M13 16h5v5h-5z" fill="#ffb900"/></svg></b>
  <b class="run"><svg viewBox="0 0 24 24"><circle cx="12" cy="12" r="11" fill="#f6c531"/><path d="M12 12L2.500 6.500A11 11 0 0 1 21.500 6.500H12z" fill="#dd4b3e"/><path d="M2.500 6.500A11 11 0 0 0 10 22.800L15 14l-3-2z" fill="#2da14f"/><circle cx="12" cy="12" r="5.200" fill="#fff"/><circle cx="12" cy="12" r="4.100" fill="#4a87ee"/></svg></b>
  <b class="run"><svg viewBox="0 0 22 24"><path d="M12 3h9v18h-9z" fill="#fff" stroke="#2b579a"/><path d="M13 6h7M13 9h7M13 12h7M13 15h7M13 18h7" stroke="#2b579a"/><path d="M0 2l13-2v24L0 22z" fill="#2b579a"/><path d="M3 8l1.500 8L6.500 9l2 7L10 8" stroke="#fff" stroke-width="1.500" fill="none"/></svg></b>
  <b class="run"><svg viewBox="0 0 24 24"><path d="M10 3l8-3 6 2v15l-8 5-6-2z" fill="#d9b52c"/><path d="M10 3l6 2v17l-6-2z" fill="#f5df75"/><path d="M18 7l4-1.500M18 12l4-1.500" stroke="#7b6510"/><path d="M0 15l8-4 6 3v5l-9 5-5-3z" fill="#e3c22e"/><circle cx="8" cy="12" r="4.500" fill="#2577bd"/><path d="M5 12l3-3 3 3-3 3z" fill="#6cc05a"/></svg></b>
  <b class="run cur"><svg><use href="#arcmap"/></svg></b>
  <div class="tray">
    <svg viewBox="0 0 16 16"><path d="M8 0l7.500 2v6q-1 6-7.500 8Q1.500 14 .5 8V2z" fill="#e0342e"/><path d="M5 4l6 6M11 4l-6 6" stroke="#fff" stroke-width="2"/></svg>
    <svg viewBox="0 0 16 16"><path d="M1 4h11l2-3H3z" fill="#e09040"/><path d="M1 4l6 11 2-4-5-7z" fill="#2b7fd0"/><path d="M15 2L8 15l-1-4 5-9z" fill="#3fae5a"/></svg>
    <svg viewBox="0 0 16 16"><path d="M5.500.5h5v4h-5zM3.500 4.500h9v11h-9zM9 13l2 2.500L15 10" stroke="#fff" fill="none"/></svg>
    <svg><use href="#globe"/></svg>
    <svg viewBox="0 0 16 16"><path d="M1 12q-1-4 3-4 1-4 5-4t4 4q3 0 3 4z" fill="#888"/><path d="M5 13q-1-4 3-4 1-2 3-1 3-1 3 2 2 0 2 3z" fill="#aaa"/></svg>
    <svg viewBox="0 0 16 16"><path d="M8 0l7.500 2v6q-1 6-7.500 8Q1.500 14 .5 8V2z" fill="#fff"/><path d="M8 0v16M0 7.500h16" stroke="#000" stroke-width="1.500"/></svg>
    <svg viewBox="0 0 16 16"><path d="M2 2l4-1v13l-4-1zM7 1h6v12H7z" fill="#e5bd55"/><circle cx="11.500" cy="12" r="3.700" fill="#f6d500"/><path d="M11.500 9.500v3M11.500 13.500v1" stroke="#222" stroke-width="1.200"/></svg>
    <svg viewBox="0 0 16 16"><path d="M4.500 3.500h11v8h-11zM10 12v3M6 15h8M.5 1.500h3v4h-3zM2 6v7h2" stroke="#fff" fill="none"/></svg>
    <svg viewBox="0 0 16 16"><path d="M1 5.500h2.500L7 2v12l-3.500-3.500H1zM9 6q1.500 2 0 4M11 4q3 4 0 8M13 2q4.500 6 0 12" stroke="#fff" fill="none"/></svg>
    <div class="clock"><span data-w="42">4:43 PM</span><span data-w="52">6/21/2018</span></div>
    <div class="notif"><svg viewBox="0 0 26 26"><path d="M1 2h16v12H10l-3 3v-3H1z" fill="#fff"/><path d="M4 5.500h10M4 8h10M4 10.500h7" stroke="#111"/><circle cx="16.500" cy="17" r="8" fill="#2b2b2b" stroke="#999"/></svg><em>1</em></div>
    <i class="peek"></i>
  </div>
</footer>
<script src="fit.js"></script>
</body>
</html>
```
FILE: fit.js
```javascript
// Code spans keep their own fixed pitch and are left out of the tracking.
document.querySelectorAll('[data-w]').forEach(function (el) {
  var target = parseFloat(el.dataset.w);
  el.classList.add('fit');
  var natural = el.getBoundingClientRect().width;
  var count = el.textContent.length;
  el.querySelectorAll('code').forEach(function (c) { count -= c.textContent.length; });
  el.style.letterSpacing = ((target - natural) / count).toFixed(3) + 'px';
  el.style.width = target + 'px';
});
```
FILE: styles.css
```css
* { box-sizing: border-box; }
body { margin: 0; width: 1920px; height: 1200px; overflow: hidden; position: relative; background: #5a0009; font: 12px/16px "Noto Sans", "Open Sans", sans-serif; color: #000; }
p, h2, ol { margin: 0; padding: 0; }
i, em { display: block; }
svg { display: block; flex: none; }
.fit { display: inline-block; width: max-content; white-space: pre; flex: none; }
.sprite { position: absolute; width: 0; height: 0; }
.wall { position: absolute; left: 0; top: 0; width: 1920px; height: 1200px; }
.brand { font: 43px "Liberation Serif", serif; fill: #fff; }
.brand2 { font: 17px "Noto Sans", sans-serif; fill: #fff; }
.brand3 { font: bold 16px "Noto Sans", sans-serif; fill: #ddd; }
.ic { width: 16px; height: 16px; }
.ic10 { width: 11px; height: 11px; }

/* file explorer behind the two main windows */
.explorer { position: absolute; left: 0; top: 3px; width: 1640px; height: 1157px; background: #e3e3e3; display: flex; }
.ex-nav { width: 7px; background: linear-gradient(#e8e8e8 0 109px, #8f95a3 109px 1109px, #d4d4d4 1109px); box-shadow: inset -5px 0 5px -2px rgba(0,0,0,.25); }
.ex-main { width: 1031px; height: 1149px; background: #fff; border-bottom: 1px solid #aaa; padding-left: 835px; display: flex; flex-direction: column; overflow: hidden; color: #6d6d6d; }
.ex-top { height: 52px; border-bottom: 1px solid #dadbdc; }
.ex-ribbon { height: 92px; background: #f5f6f7; border-bottom: 1px solid #dadbdc; }
.ex-addr { height: 7px; border-bottom: 1px solid #d9d9d9; }
.ex-addr2 { height: 30px; border-bottom: 1px solid #b8b8b8; background: linear-gradient(#fff 20px, #d9d9d9 20px 21px, #fff 21px); }
.ex-head { height: 26px; margin-left: 13px; display: flex; align-items: center; border-left: 1px solid #e5e5e5; padding-left: 6px; color: #4c607a; }
.ex-type { height: 26px; margin-left: 38px; padding: 5px 0 0 7px; border-left: 1px solid #e5e5e5; }
.ex-sort { width: 5px; height: 5px; border: solid #999; border-width: 0 1px 1px 0; transform: rotate(45deg); align-self: flex-start; margin: 0 17px 0 -22px; }
.ex-rows { padding-top: 6px; }
.ex-row { height: 21px; margin-left: 1px; padding-left: 19px; display: flex; align-items: center; white-space: nowrap; }
.ex-row.on { background: #d9d9d9; }
.ex-row span:first-child { margin-right: 17px; }
.ex-row span[data-w="97"]:first-child { margin-right: 23px; }

/* ArcMap */
.arc { position: absolute; left: 6px; top: 3px; width: 836px; height: 1154px; border: 1px solid #1979ca; background: #f2f2f2; box-shadow: 3px 2px 14px rgba(0,0,0,.35); display: flex; flex-direction: column; }
.arc-title { height: 30px; background: #fff; display: flex; align-items: center; padding-left: 8px; gap: 5px; flex: none; }
.winbtns { width: 104px; height: 12px; margin-left: 585px; }
.arc-menu { height: 25px; flex: none; display: flex; align-items: center; padding: 1px 0 0 12px; gap: 16px; background: linear-gradient(90deg, #f0f0f0, #f7f7f7); }
.tb { height: 26px; width: fit-content; display: flex; align-items: center; flex: none; background: linear-gradient(90deg, rgba(255,255,255,.8), rgba(250,250,250,.5)), linear-gradient(#fdfdfd, #efefef); border-radius: 3px; }
.grip { width: 3px; height: 16px; margin: 0 4px 0 3px; background: repeating-linear-gradient(#b8b8b8 0 2px, transparent 2px 4px); }
.grip.txt { margin-right: 9px; }
.c { width: 22px; height: 22px; display: flex; align-items: center; justify-content: center; flex: none; font-weight: normal; }
.c svg { width: 16px; height: 16px; }
.c.on { border: 1px solid #3399ff; background: #e2edf9; }
.c.off { border: 1px solid #aab; background: #e6eef7; }
.v { width: 1px; height: 15px; margin: 0 2px 0 3px; background: #c0c0c0; flex: none; }
.d { width: 10px; height: 10px; flex: none; display: flex; align-items: center; justify-content: center; }
.d::after { content: ""; border: 3px solid transparent; border-top-color: #111; border-bottom: 0; }
.d.wide { width: 12px; }
.d.far { margin-left: 18px; }
.gap7 { margin-left: 7px; }
.ovf { width: 11px; height: 24px; margin-left: 2px; background: linear-gradient(#f0f0f0, #a6a6a6); display: flex; flex-direction: column; align-items: center; justify-content: flex-end; padding-bottom: 3px; align-self: flex-end; flex: none; }
.ovf::before { content: ""; width: 6px; height: 1px; background: #111; margin-bottom: 2px; }
.ovf::after { content: ""; border: 3px solid transparent; border-top-color: #111; border-bottom: 0; }
.combo { height: 21px; border: 1px solid #7a7a7a; background: #fff; display: flex; align-items: center; padding: 0 5px 0 3px; font-size: 11.5px; flex: none; }
.combo .chev { margin-left: auto; }
.chev { width: 6px; height: 6px; border: solid #555; border-width: 0 1px 1px 0; transform: translateY(-2px) rotate(45deg); }
.scale { width: 148px; margin-left: 1px; }
.search { width: 167px; border-color: #aaa; color: #888; justify-content: flex-end; padding-right: 1px; margin-left: 1px; font-size: 12px; font-style: italic; }
.tbline { display: flex; flex: none; margin-top: -1px; }
.terr { width: 293px; }
.more { margin-left: auto; margin-right: 1px; }
.more::before { width: 7px; height: 4px; margin-bottom: 8px; background: radial-gradient(circle at 1px 2px, #111 1.2px, transparent 1.5px) 0 0/4px 4px; border-bottom: 0; }
.terr .more { margin-right: 0; }
.draw { margin-left: 4px; width: 538px; }
.box { width: 13px; height: 13px; border: 1.5px solid #333; background: #f0f2f6; }
.serif { font: bold 18px "Liberation Serif", serif; }
.serif.s { font-size: 15px; }
.it { font-style: italic; }
.un { text-decoration: underline; }
.face { width: 171px; margin-left: 1px; gap: 5px; font-family: "Liberation Sans", sans-serif; font-size: 12px; }
.size { width: 46px; margin-right: 1px; }
.tb.layout { height: 25px; margin-left: 429px; }
.layout .grip { margin-left: 0; }
.pct { width: 60px; border-color: #bbb; }
.pct .chev { border-color: #aaa; }
.pct mark { background: #3399ff; color: #444; letter-spacing: -.8px; line-height: 14px; }
.arc-body { display: flex; height: 922px; flex: none; margin-top: 1px; margin-bottom: -1px; }
.toc { width: 285px; display: flex; flex-direction: column; }
.toc-head { height: 20px; background: linear-gradient(90deg, #bfcddb, #d6e4f2); display: flex; align-items: center; justify-content: space-between; padding: 1px 4px 0; }
.toc-head svg { width: 26px; height: 12px; }
.toc .tocbar { height: 26px; width: auto; margin-left: 4px; }
.tree { width: 284px; height: 854px; border: 1px solid #828790; border-left: 0; background: #fff; padding-top: 1px; flex: none; }
.tr { height: 18px; display: flex; align-items: center; }
.l0 { padding-left: 9px; } .l1 { padding-left: 28px; } .l2 { padding-left: 47px; }
.s1 { padding-left: 60px; } .s2 { padding-left: 79px; }
.pm { width: 9px; height: 9px; border: 1px solid #919191; border-radius: 1px; background: linear-gradient(#3355aa, #3355aa) center/5px 1px no-repeat #f4f4f4; margin-right: 8px; margin-top: 2px; }
.l0 .pm { margin-right: 6px; }
.l0 strong { margin-left: 5px; }
.cb { width: 11px; height: 11px; border: 1px solid #000; margin-right: 8px; margin-top: 1px; background: #fff; }
.cb svg { width: 9px; height: 9px; }
.l1 mark, .l2 mark { margin-left: -2px; padding: 1px 2px; background: #3399ff; color: #fff; height: 18px; display: flex; align-items: center; }
.sw { width: 15px; height: 11px; border: 1px solid #6e6e6e; }
.cyan { background: #bef5f7; } .green { background: #cbfad0; } .blue { background: #bcc9f2; }
.tabs { display: flex; padding-left: 3px; gap: 1px; }
.tab { height: 20px; width: 114px; display: flex; align-items: center; gap: 4px; padding-left: 4px; border: 1px solid #999; border-width: 0 1px 1px 0; border-radius: 0 0 4px 4px; color: #777; }
.tab.act { width: 123px; background: #fff; color: #000; padding-left: 4px; }
.tab .ic { width: 15px; height: 15px; }
.mapwrap { width: 520px; margin-left: 5px; display: flex; flex-direction: column; background: #f0f0f0; border: 1px solid #6d6d6d; border-width: 2px 0 0 2px; height: 919px; }
.maprow { display: flex; height: 901px; flex: none; }
.map { width: 502px; overflow: hidden; background: #fdfeff; border-right: 1px solid #ddd; border-bottom: 1px solid #ddd; padding: 303px 0 0 1px; }
.map svg { width: 520px; height: 300px; }
.vs { width: 14px; margin-left: 1px; display: flex; flex-direction: column; align-items: center; background: #f0f0f0; }
.vs .thumb { width: 14px; flex: 1; background: #cdcdcd; }
.thumb { background: #cdcdcd; }
.ar { width: 15px; height: 17px; display: flex; align-items: center; justify-content: center; }
.ar::after { content: ""; width: 6px; height: 6px; border: solid #555; border-width: 2px 0 0 2px; transform: rotate(45deg); }
.dn { padding-bottom: 4px; }
.dn::after { transform: rotate(225deg); } .lf::after { transform: rotate(-45deg); } .rt::after { transform: rotate(135deg); }
.hs { display: flex; height: 16px; align-items: center; }
.hs .thumb { width: 391px; height: 14px; margin-left: 1px; }
.hs .lf { margin-left: 1px; }
.vw { width: 17px; height: 16px; display: flex; align-items: center; justify-content: center; }
.vw.on { background: #cce4f7; border: 1px solid #99d1ff; }
.hs .v { margin-right: 3px; }
.pause::before { content: ""; width: 6px; height: 8px; border: solid #1c4f8f; border-width: 0 2px; }
.cat { padding: 3px 0 0 5px; }
.cat-tab { width: 17px; height: 72px; border: 1px solid #aaa; border-radius: 0 4px 4px 0; padding-top: 3px; color: #666; }
.cat-tab .ic { width: 14px; height: 14px; }
.cat-tab span { display: block; writing-mode: vertical-rl; line-height: 14px; margin-top: 3px; font-size: 11.5px; }
.arc-status { display: flex; align-items: center; height: 20px; background: #f0f0f0; padding: 1px 0 0 408px; }
.arc-status i { height: 18px; border: 1px solid #f7f7f7; width: 127px; }
.arc-status i + i { width: 17px; margin: 0 8px 0 2px; }
.arc-status svg { width: 9px; height: 9px; margin: 8px 0 0 98px; }

/* Word */
.word { position: absolute; left: 1037px; top: 3px; width: 838px; height: 1154px; border: 1px solid #777; background: #e6e6e6; box-shadow: 3px 2px 12px rgba(0,0,0,.4); display: flex; flex-direction: column; color: #444; }
.word::before { content: ""; position: absolute; left: 0; top: 0; right: 0; height: 58px; background: #2b579a; }
.circuit { position: absolute; left: 0; top: 0; width: 836px; height: 58px; }
.w-title { height: 34px; position: relative; display: flex; align-items: flex-start; padding: 6px 0 0 22px; }
.qat { width: 110px; height: 18px; }
.w-name { margin: 4px 24px 0 58px; color: #a9bfe0; }
.w-btns { width: 152px; height: 12px; margin-top: 2px; }
.w-tabs { height: 24px; position: relative; display: flex; align-items: center; color: #fff; padding-left: 20px; gap: 20px; }
.file { margin-right: 4px; }
.home { background: #f1f1f1; color: #2b579a; width: 51px; height: 24px; padding: 4px 0 0 9px; margin: 0 -9px 0 0; flex: none; }
.bulb { width: 12px; height: 15px; margin-left: -3px; }
.tell { color: #b8c9e4; margin-left: -12px; }
.user { margin-left: -11px; }
.share { height: 23px; width: 63px; background: #124078; display: flex; align-items: center; gap: 3px; padding-left: 7px; margin-left: -10px; }
.share svg { width: 16px; height: 16px; }
.ribbon { height: 93px; background: #f1f1f1; border-bottom: 1px solid #c8c8c8; display: flex; align-items: stretch; }
.ribbon .d::after, .wc .d::after { border-width: 3px 3px 0; border-top-color: #666; }
.g { display: flex; flex-direction: column; border-right: 1px solid #d0d0d0; margin: 4px 0 3px; flex: none; }
.g-body { height: 72px; display: flex; flex: none; }
.g-body.col { flex-direction: column; }
.g-lab { display: flex; align-items: center; justify-content: center; height: 15px; color: #5c5c5c; position: relative; }
.font .g-lab, .styl .g-lab { padding-right: 17px; }
.la { width: 8px; height: 8px; position: absolute; right: 4px; top: 4px; }
.clip { width: 74px; }
.clip .g-lab { justify-content: flex-start; padding-left: 4px; }
.pastebtn { width: 50px; padding: 3px 0 0 11px; display: flex; flex-direction: column; align-items: flex-start; }
.pastebtn svg { width: 28px; height: 30px; margin-left: 2px; }
.pastebtn span { margin-top: 4px; }
.pastebtn .d { margin-left: 8px; }
.clipcol { display: flex; flex-direction: column; gap: 7px; padding-top: 2px; }
.clipcol svg { width: 16px; height: 16px; }
.font { width: 263px; }
.r { display: flex; align-items: center; }
.r1 { margin: 7px 0 0 4px; height: 23px; }
.wc { height: 23px; border: 1px solid #ababab; background: #fff; display: flex; align-items: center; padding-left: 2px; font-size: 12.5px; }
.wc .d { margin-left: auto; }
.wf { width: 94px; } .ws { width: 43px; margin-left: -1px; margin-right: 3px; padding-left: 4px; }
.big { font-size: 16px; } .sm { font-size: 13px; }
.big sup, .sm sup { font-size: 9px; color: #3b73af; line-height: 8px; align-self: flex-start; }
.ribbon .v { height: 22px; background: #d4d4d4; }
.aa { font-weight: normal; font-size: 14px; width: 21px; margin: 0 4px 0 3px; }
.er { margin-left: 1px; }
.r2 { margin: 9px 0 0 3px; height: 22px; font-size: 14px; }
.r2 .v { margin: 0 3px; }
.r2 .d { width: 12px; }
.r2 .bd { font-weight: bold; }
.r2 .it { font-family: "Liberation Serif", serif; font-weight: bold; font-size: 16px; }
.r2 .un { font-weight: bold; }
.st { text-decoration: line-through; font-size: 11px; }
.xx { font-weight: bold; } .xx sub, .xx sup { font-size: 8px; color: #3b73af; }
.xx sub { align-self: flex-end; } .xx sup { align-self: flex-start; }
.glow { color: #fff; -webkit-text-stroke: 1px #3b73af; font-size: 17px; }
.hl { border-bottom: 4px solid #ff0; width: 18px; margin: 0 2px 0 3px; font-size: 11px; height: 18px; }
.fc { border-bottom: 4px solid #4f81bd; width: 18px; margin: 0 2px; font-size: 15px; height: 18px; }
.para { width: 163px; }
.para .r { height: 23px; padding-left: 4px; }
.p1 .d, .p3 .d { width: 12px; }
.p1 .v { margin-left: 2px; margin-right: 4px; }
.sel { background: #c5c5c5; }
.p2 .v { margin: 0 2px 0 3px; }
.p3 .v { margin: 0 3px 0 4px; }
.pil { font-size: 16px; color: #555; }
.styl { width: 246px; }
.gal { margin: 2px 0 0 5px; width: 234px; height: 60px; border: 1px solid #ababab; background: #fff; display: flex; padding-left: 7px; gap: 14px; }
.gal > div { width: 58px; flex: none; display: flex; flex-direction: column; align-items: center; padding-top: 12px; }
.gal p:first-child { font: 14px/18px "Noto Serif", Caladea, "Liberation Serif", serif; color: #000; }
.gal .q1:first-child { font-size: 12px; }
.gal p + p { margin-top: 8px; font-size: 11.5px; color: #666; }
.gs { margin-left: -5px; width: 15px; display: flex; flex-direction: column; border-left: 1px solid #ababab; flex: none; }
.gs i { flex: 1; display: flex; align-items: center; justify-content: center; border-bottom: 1px solid #ababab; }
.gs i:last-child { border: 0; }
.gs i::after { content: ""; border: 3px solid transparent; border-top-color: #666; border-bottom: 0; }
.gs .u { background: #e1e1e1; } .gs .u::after { transform: rotate(180deg); border-top-color: #b0b0b0; }
.gs .m { flex-direction: column; } .gs .m::before { content: ""; width: 7px; height: 1px; background: #666; margin-bottom: 3px; }
.edit { width: 44px; align-items: center; }
.ebox { width: 30px; height: 30px; border: 1px solid #c8c8c8; background: #fdfdfd; padding: 6px; }
.ebox svg { width: 16px; height: 16px; }
.edit span { margin: 5px 0 3px; }
.coll { width: 10px; height: 6px; margin: 81px 0 0 26px; }
.rulerrow { height: 22px; display: flex; }
.tabsel { width: 16px; height: 16px; margin: 3px 3px 0 4px; background: #f8f8f8; border: 1px solid #d0d0d0; font: bold 11px/14px "Noto Sans", sans-serif; text-align: center; color: #555; }
.ruler { width: 796px; height: 22px; }
.rn text { font: 10px "Noto Sans", sans-serif; fill: #333; text-anchor: middle; }
.doc { display: flex; height: 938px; margin-top: 2px; }
.vrule { width: 11px; margin: 659px 8px 0 5px; }
.vrule svg { width: 11px; height: 278px; }
.pages { width: 795px; overflow: hidden; display: flex; flex-direction: column; gap: 17px; height: 938px; color: #000; }
article { background: #fff; padding-left: 37px; font: 16.8px/20.7px "Noto Serif", "DejaVu Sans", serif; flex: none; }
.p-a { height: 645px; border-bottom: 1px solid #bbb; }
.p-b { height: 276px; border-top: 1px solid #bbb; padding-top: 143px; overflow: hidden; }
ol { list-style: none; padding-left: 33.5px; margin-top: -3px; }
ol.two { padding-left: 35px; }
article p { height: 20.7px; }
article .fit { display: block; }
li s { float: left; margin-left: -35px; text-decoration: none; font-size: 16.5px; }
ol:not(.two) li s { margin-left: -34px; }
.g3 { margin-top: 3px; } .g15 { margin-top: 14.5px; }
h2 { font: bold 20.5px/26px "Open Sans", sans-serif; color: #4f81bd; margin-top: 36.5px; }
.intro { margin-top: 15px; }
.intro + .two { margin-top: 13.5px; }
u { text-decoration: underline wavy #e00 1px; text-underline-offset: 2px; text-decoration-skip-ink: none; }
code { font: 14.8px/16px "Liberation Mono", monospace; letter-spacing: 0; }
.w-status { height: 22px; margin-top: auto; background: #f1f1f1; border-top: 1px solid #c0c0c0; display: flex; align-items: center; padding: 0 0 1px 7px; color: #555; }
.w-status span + span { margin-left: 19px; }
.w-status > svg { width: 16px; height: 14px; margin-left: 19px; }
.views { display: flex; margin-left: 350px; }
.views b { width: 38px; height: 21px; display: flex; align-items: center; justify-content: center; }
.views b svg { width: 15px; height: 15px; }
.w-status .zoomer { width: 124px; height: 12px; margin: 0 13px 0 5px; }

.watermark { position: absolute; left: 1600px; top: 1061px; color: rgba(120,120,120,.55); font-size: 19px; line-height: 24px; }
.watermark p { display: block; }
.watermark .sm { font-size: 14px; line-height: 20px; }

/* taskbar */
.taskbar { position: absolute; left: 0; top: 1160px; width: 1920px; height: 40px; background: linear-gradient(90deg, #000 30%, #0a0003 60%, #0d0003); display: flex; color: #fff; }
.taskbar > b { width: 40px; height: 40px; margin: 0 4.6px; display: flex; align-items: center; justify-content: center; }
.taskbar > b svg { width: 22px; height: 24px; }
.taskbar > .start { width: 48px; margin: 0; }
.taskbar > .start svg { width: 17px; height: 17px; }
.taskbar > .start + .start { margin-right: 2px; }
.taskbar > .start + .start svg { width: 20px; }
.run { border-bottom: 3px solid #76b9ed; padding-top: 3px; }
.taskbar > .cur { background: #333; width: 48px; margin: 0 0 0 .6px; }
.taskbar > .cur svg { width: 25px; height: 26px; }
.tray { margin-left: auto; display: flex; align-items: center; gap: 8px; }
.tray > svg { width: 16px; height: 16px; }
.clock { display: flex; flex-direction: column; align-items: center; line-height: 18px; width: 56px; }
.notif { position: relative; width: 26px; height: 26px; margin-left: 9px; }
.notif em { position: absolute; left: 13px; top: 9px; font: bold 11px/16px "Noto Sans", sans-serif; }
.peek { width: 5px; height: 40px; border-left: 1px solid #555; margin-left: 1px; }
```
